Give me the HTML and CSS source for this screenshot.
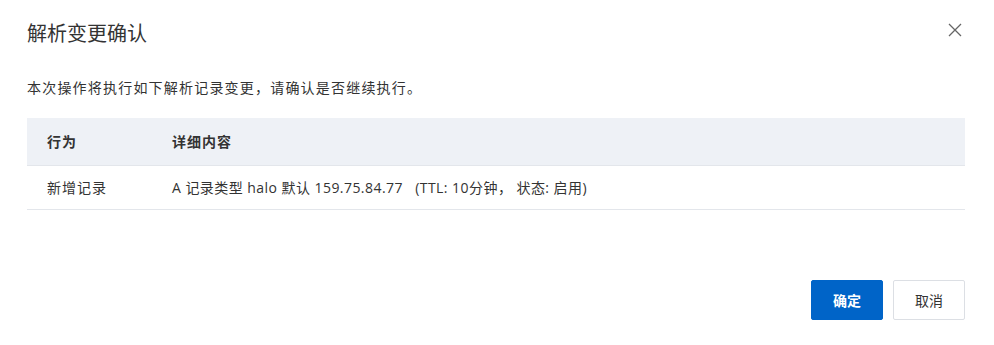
FILE: index.html
```html
<!DOCTYPE html>
<html lang="zh-CN">
<head>
<meta charset="utf-8">
<title>解析变更确认</title>
<link rel="stylesheet" href="styles.css">
</head>
<body>
<div class="dialog">
  <div class="dialog-header">
    <div class="dialog-title">解析变更确认</div>
    <button class="close-btn" aria-label="关闭">
      <svg width="14" height="14" viewBox="0 0 14 14"><path d="M1 1L13 13M13 1L1 13" stroke="#666" stroke-width="1.3" fill="none"/></svg>
    </button>
  </div>
  <div class="dialog-body">
    <p class="desc">本次操作将执行如下解析记录变更，请确认是否继续执行。</p>
    <table class="change-table">
      <thead>
        <tr><th class="col-action">行为</th><th>详细内容</th></tr>
      </thead>
      <tbody>
        <tr><td class="col-action">新增记录</td><td class="detail">A 记录类型 halo 默认 159.75.84.77 &nbsp;&nbsp;(TTL: 10分钟， 状态: 启用)</td></tr>
      </tbody>
    </table>
  </div>
  <div class="dialog-footer">
    <button class="btn btn-primary">确定</button>
    <button class="btn btn-default">取消</button>
  </div>
</div>
</body>
</html>
```
FILE: styles.css
```css
* { box-sizing: border-box; }
html, body {
  margin: 0;
  padding: 0;
  background: #fff;
}
body {
  font-family: "Segoe UI", "Open Sans", "Noto Sans", "Noto Sans CJK SC", sans-serif;
  font-size: 14px;
  color: #333;
}
.dialog {
  width: 994px;
  height: 345px;
  padding: 0 29px 0 27px;
  display: flex;
  flex-direction: column;
}
.dialog-header {
  height: 66px;
  display: flex;
  align-items: center;
  justify-content: space-between;
}
.dialog-title {
  font-family: "Noto Sans CJK SC", sans-serif;
  font-size: 20px;
  color: #333;
  line-height: 28px;
}
.close-btn {
  border: 0;
  background: none;
  padding: 0;
  margin-right: 3px;
  margin-bottom: 6px;
  width: 14px;
  height: 14px;
  display: flex;
  cursor: pointer;
}
.dialog-body {
  display: flex;
  flex-direction: column;
}
.desc {
  margin: 10px 0 0;
  line-height: 22px;
  font-size: 14px;
  letter-spacing: 1.2px;
  font-family: "Noto Sans CJK SC", sans-serif;
}
.change-table {
  margin-top: 20px;
  width: 100%;
  border-collapse: collapse;
}
.change-table th {
  background: #eef1f6;
  text-align: left;
  font-weight: bold;
  height: 47px;
  padding: 0 20px;
  border-bottom: 1px solid #e3e6eb;
  font-family: "Noto Sans CJK SC", sans-serif;
  letter-spacing: 1px;
}
.change-table td {
  height: 44px;
  padding: 0 20px;
  border-bottom: 1px solid #e3e6eb;
}
.change-table .col-action {
  width: 125px;
  letter-spacing: 1px;
}
.change-table .detail {
  letter-spacing: 0.45px;
}
.dialog-footer {
  margin-top: auto;
  margin-bottom: 25px;
  display: flex;
  justify-content: flex-end;
  gap: 10px;
}
.btn {
  width: 72px;
  height: 40px;
  border-radius: 2px;
  font-family: "Noto Sans CJK SC", sans-serif;
  font-size: 14px;
  cursor: pointer;
}
.btn-primary {
  background: #0064c8;
  border: 1px solid #0064c8;
  color: #fff;
  font-weight: bold;
}
.btn-default {
  background: #fff;
  border: 1px solid #dcdfe4;
  color: #333;
}
```
